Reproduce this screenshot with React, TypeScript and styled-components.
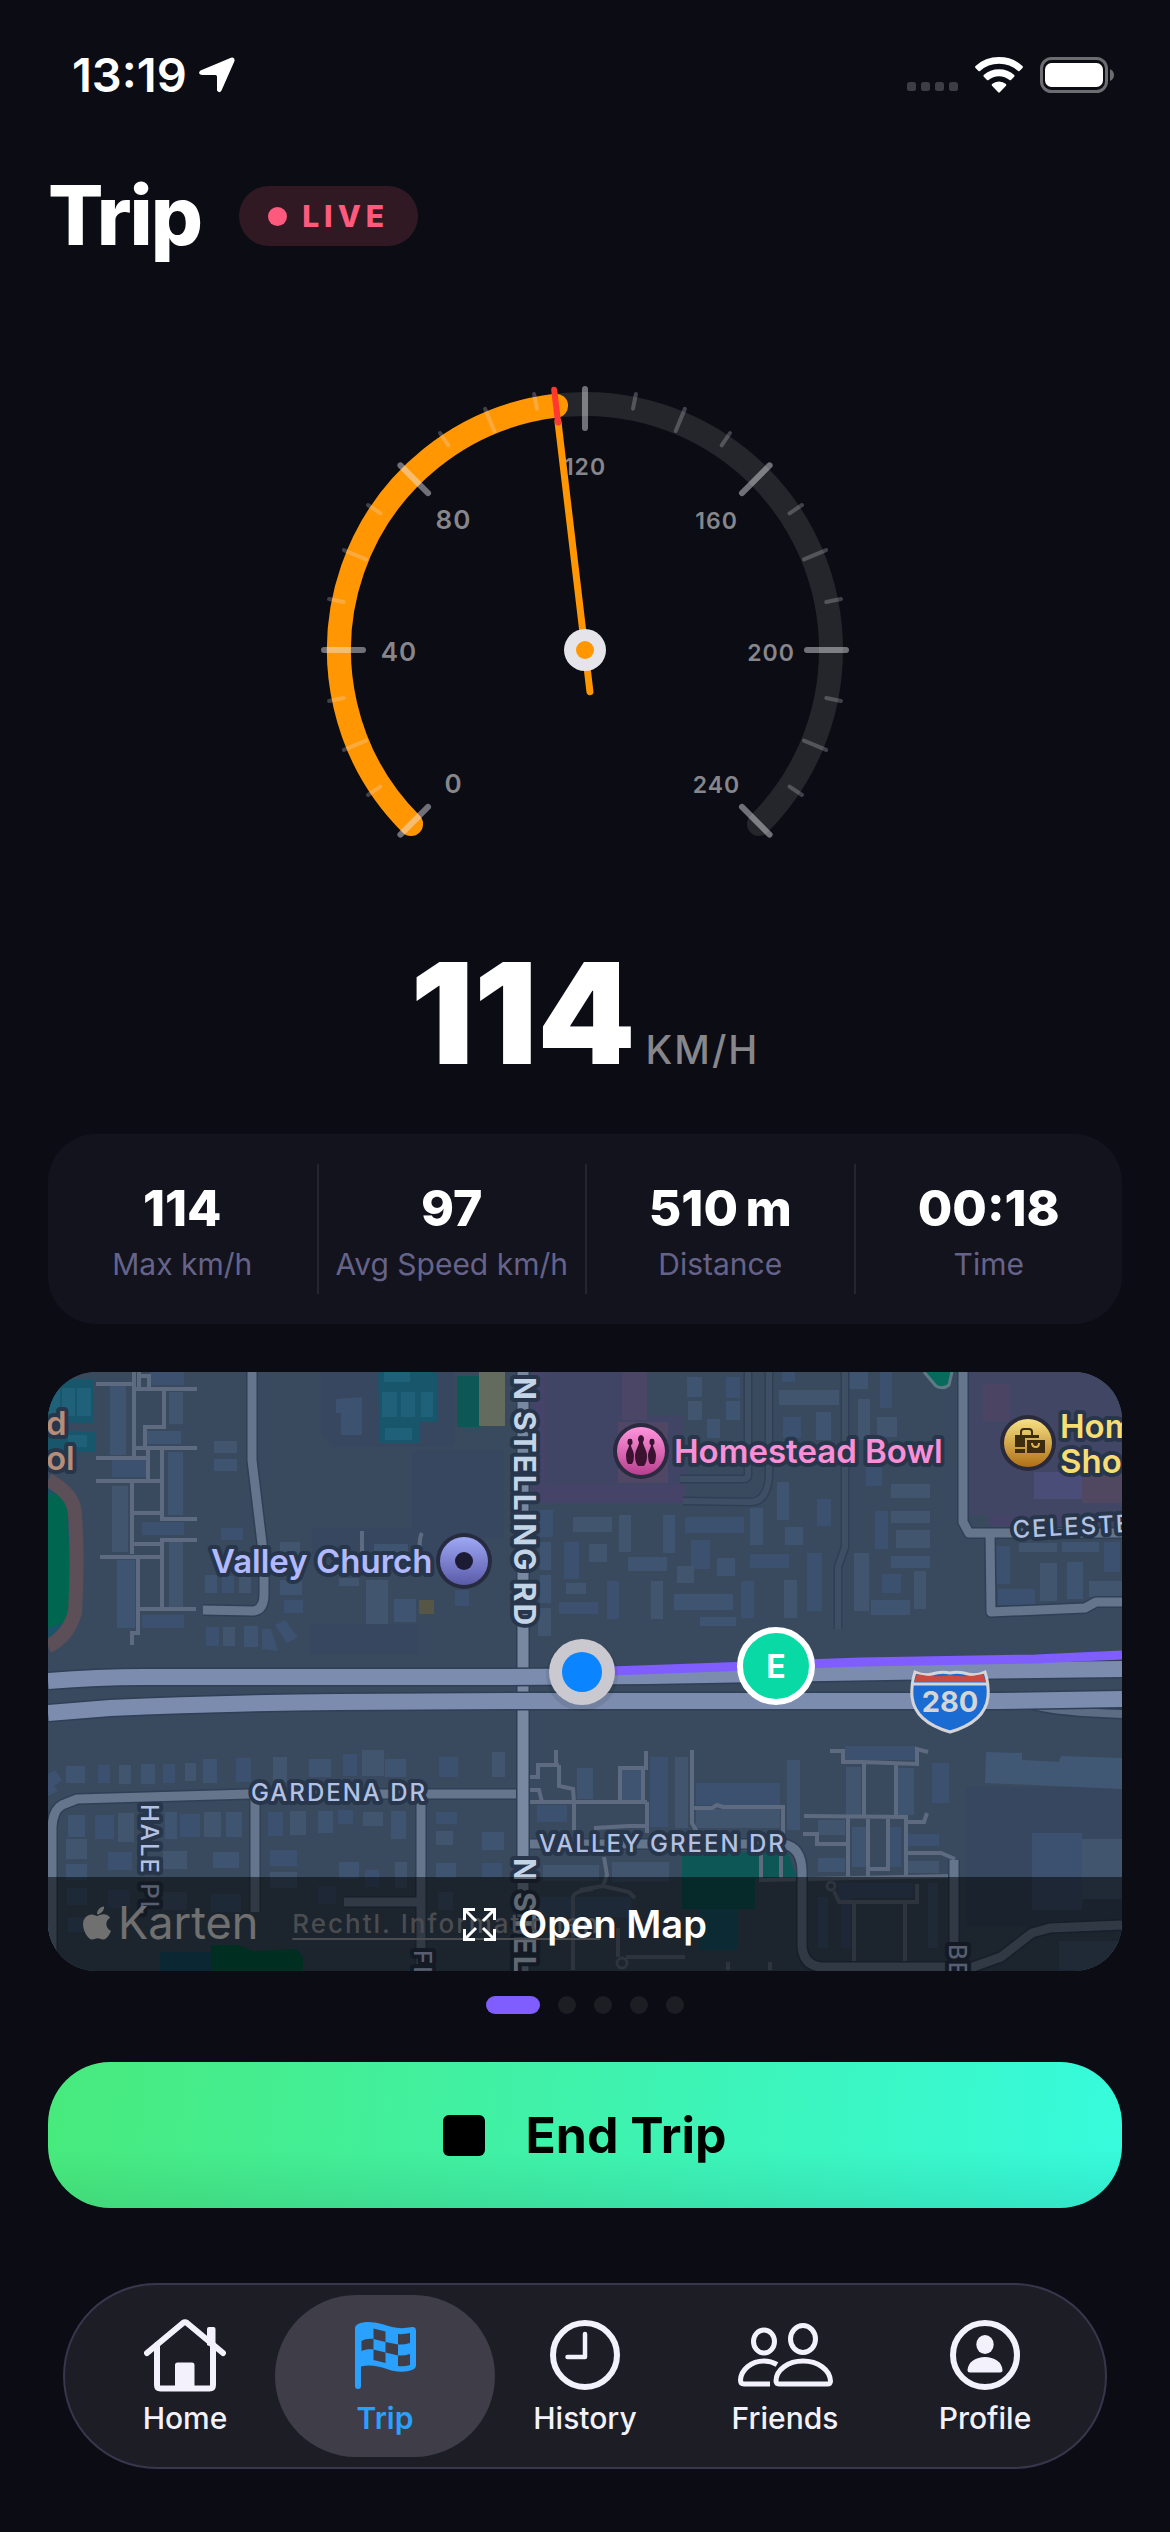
import React from "react";
import styled, { createGlobalStyle } from "styled-components";
import { FaApple } from "react-icons/fa";

const GlobalStyle = createGlobalStyle`
  * {
    box-sizing: border-box;
  }

  body {
    margin: 0;
    background: #0b0c14;
    color: #ffffff;
    font-family: Inter, "Liberation Sans", sans-serif;
  }

  button {
    font-family: inherit;
    border: none;
    cursor: pointer;
  }

  svg {
    display: block;
    flex-shrink: 0;
  }
`;

const Page = styled.main`
  min-height: 100vh;
  display: flex;
  flex-direction: column;
  padding: 0 48px 63px;
`;

/* ---------- status bar ---------- */

const StatusBar = styled.div`
  display: flex;
  align-items: center;
  justify-content: space-between;
  height: 150px;
  padding: 0 8px 0 24px;
`;

const StatusGroup = styled.div<{ $gap: number; $align?: string }>`
  display: flex;
  align-items: ${(props) => props.$align || "center"};
  gap: ${(props) => props.$gap}px;
`;

const Clock = styled.span`
  font-size: 47px;
  font-weight: 600;
  line-height: 54px;
`;

/* ---------- header ---------- */

const Header = styled.header`
  display: flex;
  align-items: center;
  gap: 38px;
  height: 132px;
`;

const Title = styled.h1`
  margin: 0;
  font-size: 82px;
  font-weight: 800;
  line-height: 100px;
  letter-spacing: -2px;
`;

const LivePill = styled.span`
  display: flex;
  align-items: center;
  gap: 15px;
  height: 60px;
  padding: 0 29px;
  border-radius: 30px;
  background: #311924;
  color: #ff5a7d;
  font-size: 30px;
  font-weight: 800;
  letter-spacing: 5px;
`;

const LiveDot = styled.span`
  width: 19px;
  height: 19px;
  border-radius: 50%;
  background: #ff5a7d;
`;

/* ---------- gauge ---------- */

const GaugeSvg = styled.svg`
  align-self: center;
  margin-top: 98px;
  width: 540px;
  height: 480px;
`;

const GaugeLabel = styled.text<{ $small: boolean }>`
  fill: #86868b;
  font-size: ${(props) => (props.$small ? 23 : 26)}px;
  font-weight: 600;
  letter-spacing: 1px;
  text-anchor: middle;
`;

const SpeedRow = styled.div`
  display: flex;
  align-items: baseline;
  justify-content: center;
  gap: 10px;
  margin-top: 83px;
`;

const SpeedValue = styled.span`
  font-size: 140px;
  font-weight: 900;
  line-height: 140px;
`;

const SpeedUnit = styled.span`
  color: #86868b;
  font-size: 39px;
  font-weight: 500;
  line-height: 48px;
  letter-spacing: 2px;
`;

/* ---------- stats ---------- */

const StatsCard = styled.dl`
  display: grid;
  grid-template-columns: repeat(4, 1fr);
  margin: 51px 0 0;
  padding: 30px 0;
  border-radius: 48px;
  background: #13131e;
`;

const Stat = styled.div`
  display: flex;
  flex-direction: column-reverse;
  align-items: center;
  justify-content: center;
  height: 130px;
  padding-top: 10px;

  & + & {
    border-left: 2px solid #25252f;
  }
`;

const StatValue = styled.dd`
  margin: 0;
  font-size: 50px;
  font-weight: 800;
  line-height: 60px;
`;

const StatLabel = styled.dt`
  color: #66638a;
  font-size: 30px;
  font-weight: 400;
  line-height: 52px;
`;

/* ---------- map ---------- */

const MapCard = styled.section`
  position: relative;
  margin-top: 48px;
  aspect-ratio: 1074 / 599;
  border-radius: 48px;
  overflow: hidden;
  background: #394a5f;
`;

const MapSvg = styled.svg`
  width: 100%;
  height: 100%;
`;

const MapText = styled.text<{ $color?: string; $size?: number; $weight?: number; $spacing?: number }>`
  fill: ${(props) => props.$color || "#b3c1e3"};
  font-size: ${(props) => props.$size || 24}px;
  font-weight: ${(props) => props.$weight || 500};
  letter-spacing: ${(props) => props.$spacing || 0}px;
  stroke: #27364a;
  stroke-width: 8px;
  stroke-linejoin: round;
  paint-order: stroke;
`;

const Attribution = styled.div`
  position: absolute;
  left: 30px;
  bottom: 18px;
  display: flex;
  align-items: center;
  gap: 34px;
  color: #e4e4e4;
`;

const MapBrand = styled.span`
  display: flex;
  align-items: center;
  gap: 2px;
  font-size: 45px;
  font-weight: 400;
  line-height: 60px;
`;

const LegalLink = styled.a`
  color: #989ca2;
  font-size: 26px;
  font-weight: 500;
  letter-spacing: 2px;
  text-underline-offset: 5px;
  white-space: nowrap;
`;

const OpenMapButton = styled.button`
  position: absolute;
  left: 0;
  right: 0;
  bottom: 0;
  display: flex;
  align-items: center;
  justify-content: center;
  gap: 22px;
  height: 94px;
  background: rgba(0, 0, 0, 0.51);
  color: #ffffff;
  font-size: 38px;
  font-weight: 600;
`;

const Pager = styled.div`
  display: flex;
  justify-content: center;
  gap: 18px;
  margin-top: 25px;
`;

const PagerDot = styled.span<{ $active?: boolean }>`
  width: ${(props) => (props.$active ? 54 : 18)}px;
  height: 18px;
  border-radius: 9px;
  background: ${(props) => (props.$active ? "#7f5dff" : "#1d1d24")};
`;

/* ---------- actions and tabs ---------- */

const EndTripButton = styled.button`
  display: flex;
  align-items: center;
  justify-content: center;
  gap: 40px;
  height: 146px;
  margin-top: 48px;
  border-radius: 62px;
  background:
    linear-gradient(180deg, rgba(0, 0, 0, 0) 60%, rgba(20, 60, 60, 0.1) 100%),
    linear-gradient(97deg, #48ea7c 0%, #36fbdd 100%);
  color: #000000;
  font-size: 50px;
  font-weight: 700;
`;

const StopSquare = styled.span`
  width: 42px;
  height: 41px;
  border-radius: 6px;
  background: #000000;
`;

const TabBar = styled.nav`
  display: grid;
  grid-template-columns: repeat(5, 1fr);
  height: 186px;
  margin: 75px 15px 0;
  padding: 10px 20px;
  border: 2px solid #38364c;
  border-radius: 93px;
  background: #1d1d26;
`;

const Tab = styled.a<{ $active?: boolean }>`
  display: flex;
  flex-direction: column;
  align-items: center;
  margin: 0 -10px;
  padding-top: 22px;
  border-radius: 81px;
  background: ${(props) => (props.$active ? "#3f3e48" : "transparent")};
  color: ${(props) => (props.$active ? "#2aa0ff" : "#f3f2fc")};
  font-size: 30px;
  font-weight: ${(props) => (props.$active ? 600 : 500)};
  line-height: 36px;
  text-decoration: none;
`;

const TabIcon = styled.span`
  display: flex;
  align-items: center;
  justify-content: center;
  height: 76px;
  margin-bottom: 7px;
`;

const GAUGE_MAX = 240;
const SWEEP = 270;

const polar = (radius: number, degrees: number) => {
  const rad = (degrees * Math.PI) / 180;
  return { x: radius * Math.sin(rad), y: -radius * Math.cos(rad) };
};

const arcPath = (radius: number, from: number, to: number) => {
  const a = polar(radius, from);
  const b = polar(radius, to);
  return `M${a.x},${a.y}A${radius},${radius} 0 ${to - from > 180 ? 1 : 0} 1 ${b.x},${b.y}`;
};

const toAngle = (speed: number) => (speed / GAUGE_MAX) * SWEEP - SWEEP / 2;

interface SpokeProps {
  angle: number;
  from: number;
  to: number;
  width: number;
  color: string;
}

const Spoke: React.FC<SpokeProps> = ({ angle, from, to, width, color }) => {
  const a = polar(from, angle);
  const b = polar(to, angle);
  return (
    <line
      x1={a.x}
      y1={a.y}
      x2={b.x}
      y2={b.y}
      stroke={color}
      strokeWidth={width}
      strokeLinecap="round"
    />
  );
};

const Gauge: React.FC<{ speed: number }> = ({ speed }) => {
  const ticks = Array.from({ length: 25 }, (_, i) => i * 10);
  const labels = [0, 40, 80, 120, 160, 200, 240];
  const angle = toAngle(speed);

  return (
    <GaugeSvg viewBox="-270 -270 540 480" role="img" aria-label={`${speed} km/h`}>
      <g fill="none" strokeWidth="24" strokeLinecap="round">
        <path d={arcPath(246, -135, 135)} stroke="#25262b" />
        <path d={arcPath(246, -135, angle)} stroke="#ff9602" />
      </g>
      {ticks.map((value) => {
        const major = value % 40 === 0;
        const inner = value % 20 === 0 ? 237 : 246;
        return (
          <Spoke
            key={value}
            angle={toAngle(value)}
            from={major ? 222 : inner}
            to={261}
            width={major ? 6 : 4}
            color={major ? "rgba(235,235,245,0.45)" : "rgba(235,235,245,0.24)"}
          />
        );
      })}
      {labels.map((value) => {
        const at = polar(186, toAngle(value));
        return (
          <GaugeLabel key={value} x={at.x} y={at.y + 11} $small={value >= 100}>
            {value}
          </GaugeLabel>
        );
      })}
      <Spoke angle={angle} from={-42} to={230} width={7} color="#ff9602" />
      <Spoke angle={angle} from={229} to={262} width={6} color="#ff3830" />
      <circle r="21" fill="#e5e4ea" />
      <circle r="9" fill="#ff9602" />
    </GaugeSvg>
  );
};

type Box = [number, number, number, number];

const buildings: Box[] = [
  [62, 14, 16, 69], [102, 0, 34, 13], [121, 20, 14, 32], [99, 59, 34, 13],
  [64, 87, 35, 18], [64, 114, 16, 66], [120, 80, 15, 63], [94, 150, 42, 13],
  [121, 170, 14, 65], [69, 188, 18, 68], [94, 243, 42, 13], [166, 69, 23, 12],
  [166, 87, 23, 12], [173, 156, 22, 12], [232, 170, 20, 18], [157, 203, 12, 18],
  [174, 204, 12, 17], [191, 204, 12, 17], [232, 208, 22, 15], [236, 228, 19, 13],
  [318, 208, 22, 44], [346, 227, 22, 23], [407, 218, 14, 16], [291, 206, 20, 8],
  [326, 172, 34, 16], [158, 255, 13, 19], [175, 255, 12, 19], [196, 254, 14, 21],
  [492, 138, 13, 27], [525, 145, 39, 15], [492, 170, 11, 28], [516, 170, 15, 37],
  [518, 211, 20, 11], [492, 203, 11, 28], [511, 230, 39, 12], [490, 236, 13, 28],
  [639, 5, 15, 20], [678, 5, 14, 21], [640, 29, 14, 19], [678, 29, 14, 19],
  [734, 0, 13, 10], [731, 18, 60, 15], [801, 0, 19, 17], [832, 0, 12, 36],
  [810, 27, 12, 41], [768, 40, 15, 28], [735, 45, 18, 21], [829, 45, 20, 20],
  [659, 47, 13, 19], [818, 95, 16, 19], [843, 112, 39, 14], [729, 110, 12, 38],
  [769, 127, 14, 27], [843, 139, 39, 12], [702, 136, 13, 37], [637, 145, 59, 16],
  [571, 143, 12, 37], [615, 143, 12, 38], [827, 139, 13, 38], [848, 158, 34, 18],
  [737, 155, 18, 18], [702, 182, 39, 14], [541, 172, 18, 18], [580, 185, 39, 14],
  [643, 168, 19, 29], [629, 194, 17, 17], [669, 186, 18, 18], [759, 181, 15, 58],
  [806, 181, 15, 58], [843, 184, 39, 12], [834, 202, 19, 19], [866, 199, 12, 38],
  [823, 228, 39, 15], [559, 209, 12, 38], [603, 209, 12, 38], [626, 222, 59, 16],
  [693, 209, 13, 37], [736, 208, 13, 38], [652, 245, 36, 9], [946, 174, 16, 38],
  [971, 171, 38, 9], [1014, 170, 37, 10], [1056, 170, 16, 30], [992, 191, 17, 38],
  [1019, 190, 16, 37], [950, 217, 37, 16], [1041, 209, 33, 16],
  [18, 394, 19, 17], [50, 393, 12, 18], [71, 393, 12, 19], [93, 392, 14, 20],
  [115, 392, 12, 19], [137, 391, 11, 18], [155, 387, 14, 24], [188, 386, 15, 24],
  [225, 385, 14, 25], [261, 387, 22, 18], [295, 382, 14, 22], [314, 378, 22, 26],
  [337, 387, 21, 18], [391, 385, 19, 20], [444, 380, 13, 25], [20, 443, 17, 22],
  [47, 443, 19, 24], [70, 441, 16, 29], [117, 440, 12, 27], [132, 442, 20, 23],
  [156, 440, 17, 25], [178, 440, 16, 25], [220, 440, 15, 24], [242, 439, 16, 24],
  [270, 439, 15, 22], [290, 438, 15, 14], [315, 440, 20, 14], [343, 439, 15, 28],
  [388, 440, 21, 12], [388, 459, 17, 14], [434, 460, 22, 18], [489, 433, 30, 17],
  [18, 467, 21, 20], [18, 492, 21, 16], [60, 480, 24, 18], [115, 479, 24, 18],
  [165, 480, 26, 16], [222, 478, 27, 16], [222, 500, 27, 16], [291, 490, 20, 17],
  [317, 498, 14, 17], [347, 490, 12, 26], [388, 491, 20, 15], [434, 491, 20, 14],
  [495, 493, 56, 16], [19, 516, 20, 17], [60, 518, 22, 18], [115, 520, 24, 18],
  [163, 522, 30, 18], [270, 514, 18, 18], [390, 520, 15, 18], [20, 545, 17, 15],
  [602, 385, 18, 70], [627, 385, 13, 71], [574, 397, 20, 31], [648, 411, 84, 22],
  [648, 437, 84, 19], [739, 388, 13, 70], [797, 374, 71, 14], [798, 395, 15, 49],
  [850, 396, 16, 47], [884, 391, 17, 40], [770, 448, 27, 15], [770, 486, 27, 14],
  [860, 462, 31, 12], [860, 489, 31, 12], [804, 455, 14, 40], [841, 455, 12, 40],
  [564, 490, 57, 20], [529, 396, 16, 31], [984, 461, 50, 77], [1034, 467, 40, 60],
  [490, 525, 93, 20], [790, 511, 75, 15], [1011, 569, 63, 29], [770, 525, 10, 51],
  [793, 525, 10, 51], [880, 511, 10, 65],
];

const courts: Box[] = [
  [336, 0, 26, 10], [334, 20, 15, 25], [353, 20, 14, 25], [373, 20, 12, 25],
  [337, 56, 27, 12], [0, 16, 12, 28], [14, 16, 13, 28], [29, 16, 14, 28],
  [20, 63, 19, 12],
];

const buildingFills = ["#3e5470", "#3c506f", "#41566e"];

const Boxes: React.FC<{ items: Box[]; fills: string[] }> = ({ items, fills }) => (
  <>
    {items.map(([x, y, width, height], i) => (
      <rect key={i} x={x} y={y} width={width} height={height} fill={fills[i % fills.length]} />
    ))}
  </>
);

// every road is drawn twice: a dark casing, then the surface
const Road: React.FC<{ d: string; width: number; color: string }> = ({ d, width, color }) => (
  <g fill="none" strokeLinejoin="round">
    <path d={d} stroke="#2f3f55" strokeWidth={width + 3} />
    <path d={d} stroke={color} strokeWidth={width} />
  </g>
);

const footpaths = [
  "M86,0V84M48,12H86M86,17H149M91,0V17M91,4H101V17M116,17V55H97V76M86,76H149M48,86H100M100,76V109M48,109H113",
  "M114,76V147H149M84,109V182M86,141H114M85,172H114M149,168H114V237M52,185H114M90,185V261H84V273M91,237H148",
  "M314,159V190M374,161Q371,166 372,176",
  "M480,405H490V393H511M508,393V378M511,393V414L525,417L526,430M480,430H599M480,418H491L494,430M526,430V458",
  "M572,430V396H598V379M595,396V430M599,430V461M548,461V456L580,454H599M644,378V451L649,460",
  "M646,436H664L669,433L675,435H735V471M713,480V508L902,504M733,480V507",
  "M782,379H795V390H815L869,392V377L880,380M816,392V444M848,392V444M756,444L858,445V504M800,445V504M820,445V504",
  "M840,445V497H821M858,450H876L879,441M755,462H769V472H800M858,481H893L907,487",
  "M786,519L791,530H869V512M806,531V592M857,531V592M556,485L559,503L555,514L532,518M555,514L581,520L587,526",
  "M578,585H637M570,556V585M525,598V525Q526,519 545,517M680,590V598M722,590V598",
].join("");

const CityMap: React.FC = () => (
  <MapSvg viewBox="0 0 1074 599" preserveAspectRatio="xMidYMid slice" aria-hidden="true">
    <defs>
      <linearGradient id="church" x1="0" y1="0" x2="0" y2="1">
        <stop offset="0" stopColor="#9ea8f5" />
        <stop offset="1" stopColor="#5a5ba9" />
      </linearGradient>
      <linearGradient id="bowl" x1="0" y1="0" x2="0" y2="1">
        <stop offset="0" stopColor="#ff95dc" />
        <stop offset="1" stopColor="#b8408e" />
      </linearGradient>
      <linearGradient id="shop" x1="0" y1="0" x2="0" y2="1">
        <stop offset="0" stopColor="#f6e184" />
        <stop offset="1" stopColor="#b06f16" />
      </linearGradient>
    </defs>
    <rect width="1074" height="599" fill="#394a5f" />
    <g fill="#36475f">
      <path d="M273,0H406V75H284L273,62Z" />
      <rect x="364" y="78" width="92" height="88" />
      <rect x="264" y="156" width="160" height="26" />
      <rect x="262" y="252" width="108" height="30" />
      <rect x="918" y="415" width="156" height="140" />
    </g>
    <path d="M492,0H599V44H635L638,131H492Z" fill="#404565" />
    <path d="M492,113H638V131H492ZM484,0H497V131H484Z" fill="#454468" />
    <rect x="921" y="0" width="153" height="143" fill="#404664" />
    <rect x="942" y="143" width="132" height="11" fill="#454468" />
    <rect x="574" y="0" width="25" height="48" fill="#4b4566" />
    <rect x="570" y="50" width="50" height="61" fill="#4f4763" />
    <rect x="935" y="12" width="26" height="37" fill="#4b4563" />
    <rect x="986" y="100" width="48" height="27" fill="#494d78" />
    <rect x="1034" y="85" width="40" height="46" fill="#504760" />

    <path d="M330,0H390L389,50H372V71H332ZM0,7H45V51H0ZM0,59H47V80H0Z" fill="#18576b" />
    <Boxes items={courts} fills={["#1f6179"]} />
    <rect x="409" y="4" width="24" height="51" fill="#0d5757" />
    <rect x="431" y="0" width="26" height="54" fill="#636b5e" />
    <rect x="371" y="228" width="15" height="14" fill="#555645" />
    <path d="M0,105Q24,120 24,150V240Q20,262 0,270Z" fill="#1b5468" />
    <path d="M0,122H17Q20,145 21,178V240L18,250L0,256Z" fill="#006650" />
    <path d="M0,108Q26,122 27,142Q30,190 27,240Q20,265 0,274" fill="none" stroke="#5d4f57" strokeWidth="14" />
    <path d="M876,0L888,14Q895,18 901,13L904,0" fill="#066b5c" stroke="#5f7a85" strokeWidth="3" />

    <Boxes items={buildings} fills={buildingFills} />
    <path
      d="M288,27L314,25V63H293V41H288ZM214,257H223L230,279L214,277ZM227,253L237,248L250,265L239,271ZM0,402L7,398L14,408L6,414L10,419L0,424Z"
      fill="#3d5170"
    />
    <path d="M938,380L974,381V388L1011,390L1013,384L1074,386V417L937,411Z" fill="#415874" />
    <path d="M634,480H740L749,506H707V537H634Z" fill="#0d5757" />
    <rect x="651" y="537" width="39" height="41" fill="#18576b" />
    <rect x="112" y="580" width="51" height="19" fill="#18506a" />
    <path d="M163,573H190L205,579L248,577L255,585V599H163Z" fill="#006045" />

    <Road d="M700,0V103Q700,107 695,107H632M721,0V105Q719,130 702,130L635,129M797,0V175L790,195V257" width={6} color="#3f4f63" />
    <path d={footpaths} fill="none" stroke="#5d6a7f" strokeWidth="4" />
    <circle cx="783" cy="514" r="4" fill="none" stroke="#5d6a7f" strokeWidth="3" />
    <circle cx="574" cy="591" r="5" fill="none" stroke="#5d6a7f" strokeWidth="3" />

    <Road d="M204,0V88L216,188V222Q216,239 204,239L155,238" width={9} color="#65758c" />
    <Road d="M915,0V150L921,161H1074M942,161L943,240L1037,236L1048,230H1074" width={9} color="#65758c" />
    <Road
      d="M207,422V540M373,422V599M296,530H373M4,599V455Q5,438 14,433L29,427L202,422H474M906,488V599"
      width={9}
      color="#65758c"
    />
    <Road
      d="M474,472H735Q754,475 754,500V575Q756,594 774,595H925L953,585L984,561L1002,556L1074,553"
      width={9}
      color="#65758c"
    />
    <Road d="M985,333Q1010,340 1074,342" width={8} color="#5c6d83" />
    <Road d="M475,0V599" width={11} color="#7788a0" />
    <Road d="M0,309Q50,305 95,305H450L600,304L900,299L1074,297" width={16} color="#7c8cae" />
    <Road d="M0,341L62,336Q170,331 290,330L483,329H950L1074,327" width={16} color="#7c8cae" />

    <path d="M534,300L813,290L988,287L1074,283" fill="none" stroke="#7f5dff" strokeWidth="9" />

    <MapText x={203} y={429} $spacing={2}>GARDENA DR</MapText>
    <MapText x={491} y={480} $spacing={2}>VALLEY GREEN DR</MapText>
    <MapText x={965} y={166} $spacing={2} transform="rotate(-3 965 166)">CELESTE</MapText>
    <MapText transform="translate(93 432) rotate(90)" $spacing={2}>HALE PL</MapText>
    <MapText transform="translate(366 578) rotate(90)" $spacing={2}>FL</MapText>
    <MapText transform="translate(901 572) rotate(90)" $spacing={2}>BE</MapText>
    <MapText transform="translate(466 5) rotate(90)" $size={30} $weight={700} $spacing={2} $color="#c5d5e8">
      N STELLING RD
    </MapText>
    <MapText transform="translate(466 486) rotate(90)" $size={30} $weight={700} $spacing={2} $color="#c5d5e8">
      N STEL
    </MapText>

    <MapText x={-2} y={63} $size={33} $weight={600} $color="#b58d79">d</MapText>
    <MapText x={-2} y={98} $size={33} $weight={600} $color="#b58d79">ol</MapText>

    <MapText x={163} y={201} $size={33} $weight={600} $color="#b1b9ff">Valley Church</MapText>
    <circle cx="416" cy="189" r="28" fill="#262b40" />
    <circle cx="416" cy="189" r="24" fill="url(#church)" />
    <circle cx="416" cy="189" r="9" fill="#1c1b33" />

    <MapText x={626} y={91} $size={33} $weight={600} $color="#f98fd6">Homestead Bowl</MapText>
    <circle cx="593" cy="79" r="28" fill="#2a2a40" />
    <circle cx="593" cy="79" r="24" fill="url(#bowl)" />
    <g fill="#3b1230">
      <path d="M593,63a3,4 0 0 1 2,7c0,4 4,8 4,14q0,6 -3,10h-6q-3,-4 -3,-10c0,-6 4,-10 4,-14a3,4 0 0 1 2,-7z" />
      <path d="M582,67a2,3 0 0 1 1,6c0,3 3,6 3,11q0,5 -2,8h-4q-2,-3 -2,-8c0,-5 3,-8 3,-11a2,3 0 0 1 1,-6z" />
      <path d="M604,67a2,3 0 0 1 1,6c0,3 3,6 3,11q0,5 -2,8h-4q-2,-3 -2,-8c0,-5 3,-8 3,-11a2,3 0 0 1 1,-6z" />
    </g>

    <MapText x={1012} y={66} $size={33} $weight={600} $color="#f8dd74">Hom</MapText>
    <MapText x={1012} y={101} $size={33} $weight={600} $color="#f8dd74">Sho</MapText>
    <circle cx="980" cy="71" r="28" fill="#2a2a3c" />
    <circle cx="980" cy="71" r="24" fill="url(#shop)" />
    <g fill="#3d2c10">
      <path d="M967,63H991V66H977V75H967ZM967,77H977V81H967Z" />
      <path d="M979,68H997V81H979Z" />
      <path d="M973,63V60Q973,57 976,57H981Q984,57 984,60V63" fill="none" stroke="#3d2c10" strokeWidth="2" />
      <path d="M984,71Q984,75 988,75Q991,75 991,71" fill="none" stroke="#e0b450" strokeWidth="2" />
    </g>

    <path
      d="M867,300Q876,304 884,302Q893,299 902,301Q911,299 920,302Q928,304 937,300Q941,312 940,325Q937,350 902,360Q867,350 864,325Q863,312 867,300Z"
      fill="#1a6bd2"
      stroke="#d5d5d8"
      strokeWidth="3"
    />
    <path d="M869,302Q886,306 902,303Q918,306 935,302L938,310H866Z" fill="#c94b41" />
    <path d="M865,312H939" stroke="#d5d5d8" strokeWidth="3" />
    <text x="902" y="340" fill="#d5d5d8" fontSize="29" fontWeight="700" textAnchor="middle">
      280
    </text>

    <circle cx="534" cy="303" r="36" fill="#000000" opacity="0.08" />
    <circle cx="534" cy="300" r="33" fill="#c9c9cf" />
    <circle cx="534" cy="300" r="20" fill="#0a84ff" />
    <circle cx="728" cy="294" r="36" fill="#09d9a4" stroke="#ffffff" strokeWidth="6" />
    <text x="728" y="306" fill="#ffffff" fontSize="32" fontWeight="700" textAnchor="middle">
      E
    </text>
  </MapSvg>
);

const LocationIcon = () => (
  <svg width="36" height="36" viewBox="0 0 36 36" fill="#ffffff">
    <path d="M32,0.800Q36,-0.500 35.500,4L22.500,33.500Q20.500,37 18,33.500V19.500Q18,18 16.500,18H3Q-2,17 1.500,13.500Z" />
  </svg>
);

const SignalDots = () => (
  <svg width="51" height="11" viewBox="0 0 51 11" fill="#3d3d43">
    {[0, 14, 28, 42].map((x) => (
      <rect key={x} x={x} width="9" height="9" rx="2.500" />
    ))}
  </svg>
);

const WifiIcon = () => (
  <svg width="48" height="36" viewBox="0 0 48 36" fill="#ffffff">
    <path d="M24,0Q38,0 47.500,9Q48.300,10 47.500,11L44.500,14Q43.700,14.600 43,14Q35,6.800 24,6.800T5,14Q4.300,14.600 3.500,14L0.500,11Q-0.300,10 0.500,9Q10,0 24,0Z" />
    <path d="M24,12.300Q33,12.300 39.300,18Q40,18.900 39.200,19.700L36,23Q35.200,23.600 34.500,23Q30,19.200 24,19.200T13.500,23Q12.800,23.600 12,23L8.800,19.700Q8,18.900 8.700,18Q15,12.300 24,12.300Z" />
    <path d="M24,24.500Q28,24.500 31,27Q31.800,27.900 31,28.800L24.800,35.300Q24,36 23.200,35.300L17,28.800Q16.200,27.900 17,27Q20,24.500 24,24.500Z" />
  </svg>
);

const BatteryIcon = () => (
  <svg width="74" height="36" viewBox="0 0 74 36">
    <rect x="1.500" y="1.500" width="65" height="33" rx="10" fill="none" stroke="#6d6d71" strokeWidth="3" />
    <rect x="5" y="6" width="58" height="24" rx="6.500" fill="#ffffff" />
    <path d="M70,12Q74,14 74,18T70,24Z" fill="#6d6d71" />
  </svg>
);

const ExpandIcon = () => (
  <svg width="33" height="33" viewBox="0 0 33 33" fill="none" stroke="#ffffff" strokeWidth="3">
    <path d="M1.500,12V1.500H12M2,2L13,13M21,1.500H31.500V12M31,2L20,13M1.500,21V31.500H12M2,31L13,20M31.500,21V31.500H21M31,31L20,20" />
  </svg>
);

const HomeIcon = () => (
  <svg width="82" height="73" viewBox="0 0 82 73" fill="none" stroke="currentColor" strokeWidth="6" strokeLinecap="round" strokeLinejoin="round">
    <path d="M3,34L39,4Q41,2.500 43,4L79,34" />
    <path d="M13,26V66Q13,69.500 16.500,69.500H65.500Q69,69.500 69,66V26" />
    <path d="M63,26V10Q63,8 65,8H69.500Q71.500,8 71.500,10V30ZM31,69V46Q31,43.500 33.500,43.500H48Q50.500,43.500 50.500,46V69Z" fill="currentColor" stroke="none" />
  </svg>
);

const FlagIcon = () => (
  <svg width="61" height="67" viewBox="0 0 61 67" fill="currentColor" fillRule="evenodd">
    <path
      d="M0,6C0,2 7,0 13,0C22,0 30,3 37,5C43,6.500 50,6.500 57,5Q61,4.500 61,9V43Q61,46 58,47.500C50,51 40,50 32,47C22,43.500 14,42.500 6,44.500V64Q6,67 3,67Q0,67 0,64Z
      M6.500,19V29C10,27.500 14,27 18.500,27.500V17C14,16.500 10,17 6.500,19Z
      M18.500,6.500V17L30.500,20V9.500Z M43,12V22.500Q49,23 55,21V11Q49,12.500 43,12Z
      M30.500,20V30.500L43,33.500V22.500Z M18.500,27.500V38L30.500,41V30.500Z M43,33.500V44Q49,45 55,43V32Q49,34 43,33.500Z"
    />
  </svg>
);

const HistoryIcon = () => (
  <svg width="70" height="70" viewBox="0 0 70 70" fill="none" stroke="currentColor" strokeLinecap="round" strokeLinejoin="round">
    <circle cx="35" cy="35" r="32" strokeWidth="6" />
    <path d="M35,14V37H17.500" strokeWidth="4.500" />
  </svg>
);

const FriendsIcon = () => (
  <svg width="95" height="64" viewBox="0 0 95 64" fill="none" stroke="currentColor" strokeWidth="5">
    <ellipse cx="26" cy="18.500" rx="10.500" ry="11.500" />
    <ellipse cx="65" cy="16" rx="12.500" ry="13.500" />
    <path d="M38,58C38,47 50,38 65,38C80,38 92,47 92.500,58Q92.500,61 89,61H42Q38,61 38,58Z" />
    <path d="M32,61H6Q2.500,61 2.500,57C3,47 13,38 26,38Q33,38 39,41.500" />
  </svg>
);

const ProfileIcon = () => (
  <svg width="70" height="70" viewBox="0 0 70 70" fill="currentColor">
    <circle cx="35" cy="35" r="32" fill="none" stroke="currentColor" strokeWidth="6" />
    <ellipse cx="35" cy="24.500" rx="8.700" ry="9.500" />
    <path d="M17.500,50C18,42 26,37 35,37C44,37 52,42 52.500,50Q52.500,52.500 50,52.500H20Q17.500,52.500 17.500,50Z" />
  </svg>
);

const stats = [
  { value: "114", label: "Max km/h" },
  { value: "97", label: "Avg Speed km/h" },
  { value: "510\u2009m", label: "Distance" },
  { value: "00:18", label: "Time" },
];

const tabs = [
  { label: "Home", icon: <HomeIcon /> },
  { label: "Trip", icon: <FlagIcon />, active: true },
  { label: "History", icon: <HistoryIcon /> },
  { label: "Friends", icon: <FriendsIcon /> },
  { label: "Profile", icon: <ProfileIcon /> },
];

const App: React.FC = () => {
  return (
    <>
      <GlobalStyle />
      <Page>
        <StatusBar>
          <StatusGroup $gap={12}>
            <Clock>13:19</Clock>
            <LocationIcon />
          </StatusGroup>
          <StatusGroup $gap={17} $align="flex-end">
            <SignalDots />
            <WifiIcon />
            <BatteryIcon />
          </StatusGroup>
        </StatusBar>

        <Header>
          <Title>Trip</Title>
          <LivePill>
            <LiveDot />
            LIVE
          </LivePill>
        </Header>

        <Gauge speed={114} />
        <SpeedRow>
          <SpeedValue>114</SpeedValue>
          <SpeedUnit>KM/H</SpeedUnit>
        </SpeedRow>

        <StatsCard>
          {stats.map((stat) => (
            <Stat key={stat.label}>
              <StatLabel>{stat.label}</StatLabel>
              <StatValue>{stat.value}</StatValue>
            </Stat>
          ))}
        </StatsCard>

        <MapCard>
          <CityMap />
          <Attribution>
            <MapBrand>
              <FaApple size={38} />
              Karten
            </MapBrand>
            <LegalLink href="#legal">Rechtl. Informationen</LegalLink>
          </Attribution>
          <OpenMapButton type="button">
            <ExpandIcon />
            Open Map
          </OpenMapButton>
        </MapCard>

        <Pager>
          <PagerDot $active />
          <PagerDot />
          <PagerDot />
          <PagerDot />
          <PagerDot />
        </Pager>

        <EndTripButton type="button">
          <StopSquare />
          End Trip
        </EndTripButton>

        <TabBar>
          {tabs.map((tab) => (
            <Tab key={tab.label} href={`#${tab.label.toLowerCase()}`} $active={tab.active}>
              <TabIcon>{tab.icon}</TabIcon>
              {tab.label}
            </Tab>
          ))}
        </TabBar>
      </Page>
    </>
  );
};

export default App;
